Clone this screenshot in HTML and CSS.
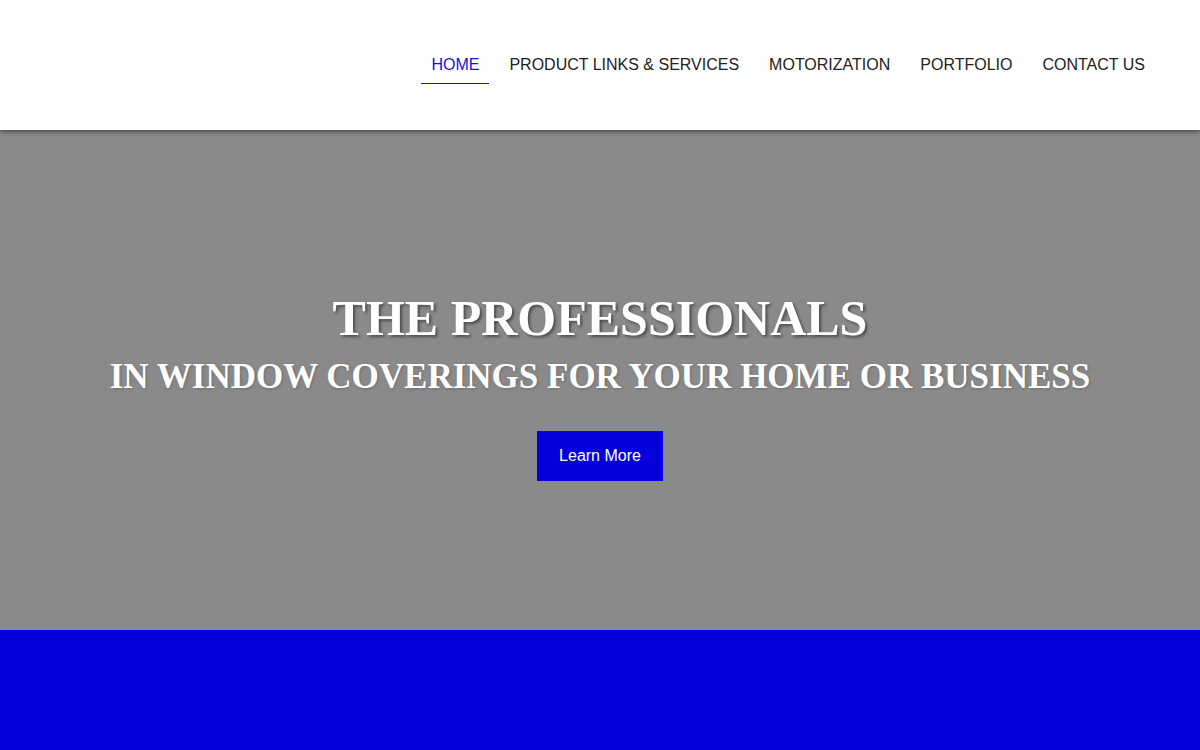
FILE: index.html
```html
<!DOCTYPE html>
<html lang="en">
<head>
<meta charset="utf-8">
<title>The Professionals in Window Coverings</title>
<link rel="stylesheet" href="styles.css">
</head>
<body>
<header class="site-header">
  <nav class="main-nav">
    <a class="nav-link active" href="#">HOME</a>
    <a class="nav-link" href="#">PRODUCT LINKS &amp; SERVICES</a>
    <a class="nav-link" href="#">MOTORIZATION</a>
    <a class="nav-link" href="#">PORTFOLIO</a>
    <a class="nav-link" href="#">CONTACT US</a>
  </nav>
</header>
<section class="hero">
  <h1 class="hero-title">THE PROFESSIONALS</h1>
  <h2 class="hero-sub">IN WINDOW COVERINGS FOR YOUR HOME OR BUSINESS</h2>
  <a class="hero-btn" href="#">Learn More</a>
</section>
<section class="band"></section>
</body>
</html>
```
FILE: styles.css
```css
* { box-sizing: border-box; }
html, body { margin: 0; padding: 0; }
body {
  font-family: "Liberation Sans", Arial, sans-serif;
  background: #ffffff;
  overflow: hidden;
}
.site-header {
  position: relative;
  z-index: 2;
  height: 130px;
  background: #ffffff;
  display: flex;
  justify-content: flex-end;
  align-items: flex-start;
  padding: 45px 45px 0 0;
  box-shadow: 0 2px 4px rgba(0, 0, 0, 0.45);
}
.main-nav {
  display: flex;
  gap: 10px;
}
.nav-link {
  display: block;
  font-size: 16px;
  line-height: 20px;
  padding: 10px 10px 8px;
  color: #222222;
  text-decoration: none;
  border-bottom: 1px solid transparent;
}
.nav-link.active {
  color: #1a0fd8;
  border-bottom-color: #1a0fd8;
}
.hero {
  height: 500px;
  background: #8a8a8a;
  display: flex;
  flex-direction: column;
  align-items: center;
  padding-top: 158px;
  text-align: center;
}
.hero-title {
  margin: 0;
  font-family: "Liberation Serif", "Times New Roman", serif;
  font-weight: bold;
  font-size: 50px;
  line-height: 60px;
  color: #ffffff;
  text-shadow: 2px 2px 3px rgba(0, 0, 0, 0.45);
}
.hero-sub {
  margin: 8px 0 0;
  font-family: "Liberation Serif", "Times New Roman", serif;
  font-weight: bold;
  font-size: 35px;
  line-height: 42px;
  color: #ffffff;
  text-shadow: 1px 1px 3px rgba(0, 0, 0, 0.2);
}
.hero-btn {
  margin-top: 33px;
  display: block;
  background: #0600dc;
  color: #ffffff;
  font-size: 16px;
  line-height: 20px;
  padding: 15px 22px;
  text-decoration: none;
}
.band {
  height: 120px;
  background: #0600dc;
}
```
